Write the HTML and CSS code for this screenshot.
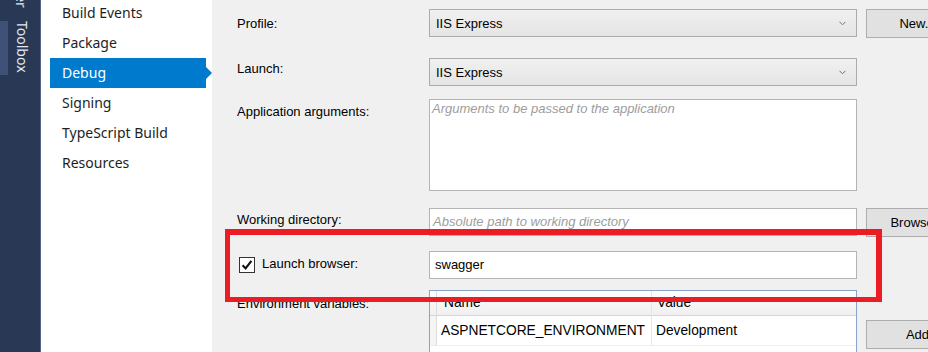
FILE: index.html
```html
<!DOCTYPE html>
<html lang="en">
<head>
    <meta charset="UTF-8">
    <title>Debug - Project Properties</title>
    <link rel="stylesheet" href="styles.css">
</head>
<body>

<div class="window">
    <div class="strip">
        <div class="strip-prev"><span class="strip-text">Server Explorer</span></div>
        <div class="strip-tab">
            <span class="strip-mark"></span>
            <span class="strip-text">Toolbox</span>
        </div>
    </div>

    <div class="nav">
        <ul class="nav-list">
            <li>Build Events</li>
            <li>Package</li>
            <li class="active">Debug</li>
            <li>Signing</li>
            <li>TypeScript Build</li>
            <li>Resources</li>
        </ul>
    </div>

    <div class="page">
        <div class="row row-profile">
            <label class="caption">Profile:</label>
            <div class="field combo">
                <span>IIS Express</span>
                <svg width="7" height="5" viewBox="0 0 7 5"><path d="M0.5 0.8 L3.5 3.8 L6.5 0.8" fill="none" stroke="#6f6f6f" stroke-width="1"/></svg>
            </div>
            <button class="btn">New...</button>
        </div>

        <div class="row row-launch">
            <label class="caption">Launch:</label>
            <div class="field combo">
                <span>IIS Express</span>
                <svg width="7" height="5" viewBox="0 0 7 5"><path d="M0.5 0.8 L3.5 3.8 L6.5 0.8" fill="none" stroke="#6f6f6f" stroke-width="1"/></svg>
            </div>
        </div>

        <div class="row row-args">
            <label class="caption">Application arguments:</label>
            <div class="field memo"><span class="hint">Arguments to be passed to the application</span></div>
        </div>

        <div class="row row-dir">
            <label class="caption">Working directory:</label>
            <div class="field textbox"><span class="hint">Absolute path to working directory</span></div>
            <button class="btn">Browse...</button>
        </div>

        <div class="row row-browser">
            <label class="caption check-caption">
                <span class="check"><svg width="14" height="14" viewBox="0 0 14 14"><path d="M2.6 7.2 L5.6 10.4 L11.4 2.8" fill="none" stroke="#111" stroke-width="2.1"/></svg></span>
                Launch browser:
            </label>
            <div class="field textbox value">swagger</div>
        </div>

        <div class="row row-env">
            <label class="caption">Environment variables:</label>
            <div class="field vars">
                <div class="vars-line vars-head">
                    <div class="cell cell-pick"></div>
                    <div class="cell">Name</div>
                    <div class="cell">Value</div>
                </div>
                <div class="vars-line">
                    <div class="cell cell-pick"></div>
                    <div class="cell">ASPNETCORE_ENVIRONMENT</div>
                    <div class="cell">Development</div>
                </div>
            </div>
            <button class="btn btn-add">Add</button>
        </div>
    </div>

    <div class="callout"></div>
</div>

</body>
</html>
```

FILE: styles.css
```css
* {
    box-sizing: border-box;
    margin: 0;
    padding: 0;
}
body {
    background: #f0f0f0;
    overflow: hidden;
    font-family: "Liberation Sans", Arial, sans-serif;
    font-size: 13px;
    color: #000;
}
.window {
    position: relative;
    display: flex;
    height: 352px;
    overflow: hidden;
}

/* side tool strip */
.strip {
    width: 41px;
    flex: none;
    background: #293955;
    border-right: 1px solid #53638a;
    display: flex;
    flex-direction: column;
    overflow: hidden;
}
.strip-prev {
    height: 8px;
    overflow: hidden;
    display: flex;
    flex-direction: column;
    align-items: flex-start;
    justify-content: flex-end;
    padding-left: 15px;
}
.strip-tab {
    display: flex;
    height: 54px;
    margin-top: 13px;
}
.strip-mark {
    width: 8px;
    background: #3f5177;
}
.strip-text {
    display: block;
    writing-mode: vertical-rl;
    font-family: "Noto Sans", sans-serif;
    font-size: 14px;
    line-height: 13px;
    color: #e4e7ec;
    white-space: nowrap;
}
.strip-tab .strip-text {
    margin-left: 8px;
    padding-top: 0;
}

/* property pages list */
.nav {
    width: 171px;
    flex: none;
    background: #fff;
    padding-left: 9px;
}
.nav-list {
    list-style: none;
    margin-top: -2px;
}
.nav-list li {
    position: relative;
    width: 156px;
    height: 30px;
    line-height: 30px;
    padding-left: 12px;
    font-family: "Noto Sans", sans-serif;
    font-size: 14px;
    color: #1e1e1e;
}
.nav-list li.active {
    background: #007acc;
    color: #fff;
}
.nav-list li.active::after {
    content: "";
    position: absolute;
    left: 100%;
    top: 9px;
    border-left: 6px solid #007acc;
    border-top: 6px solid transparent;
    border-bottom: 6px solid transparent;
}

/* debug page */
.page {
    flex: 1;
    padding: 9px 0 0 25px;
}
.row {
    display: flex;
    align-items: flex-start;
}
.caption {
    display: block;
    width: 192px;
    flex: none;
    line-height: 15px;
}
.field {
    width: 428px;
    flex: none;
}
.btn {
    width: 103px;
    height: 29px;
    flex: none;
    margin-left: 9px;
    border: 1px solid #adadad;
    background: #e1e1e1;
    font: inherit;
    color: #000;
}

.row-profile .caption { padding-top: 7px; }
.row-launch { margin-top: 20px; }
.row-launch .caption { padding-top: 3px; }
.row-args { margin-top: 13px; }
.row-args .caption { padding-top: 5px; }
.row-dir { margin-top: 17px; }
.row-dir .caption { padding-top: 4px; }
.row-browser { margin-top: 14px; }
.row-env { margin-top: 11px; }
.row-env .caption { padding-top: 6px; }

.combo {
    height: 28px;
    border: 1px solid #acacac;
    background: linear-gradient(#f0f0f0, #e5e5e5);
    display: flex;
    align-items: center;
    justify-content: space-between;
    padding: 0 10px 0 6px;
}
.textbox {
    height: 28px;
    border: 1px solid #b4b4b4;
    background: #fff;
    line-height: 26px;
    padding: 0 3px;
}
.memo {
    height: 92px;
    border: 1px solid #b4b4b4;
    background: #fff;
    padding: 1px 2px;
    line-height: 15px;
}
.hint {
    font-style: italic;
    color: #9d9d9d;
}
.value {
    padding-left: 5px;
}

.check-caption {
    display: flex;
    align-items: flex-start;
    padding: 5px 0 0 2px;
}
.check {
    width: 16px;
    height: 16px;
    margin: 1px 7px 0 0;
    border: 1px solid #333;
    background: #fff;
    display: flex;
    align-items: center;
    justify-content: center;
}

/* environment variables grid */
.vars {
    height: 62px;
    border: 1px solid #8ba3c7;
    border-bottom: none;
    background: #fff;
    font-size: 13.75px;
}
.vars-line {
    display: grid;
    grid-template-columns: 7px 215px 1fr;
}
.cell {
    height: 30px;
    line-height: 16px;
    padding: 7px 0 0 4px;
    border-right: 1px solid #e6e6e6;
    border-bottom: 1px solid #eeeeee;
    white-space: nowrap;
}
.cell:last-child {
    border-right: none;
}
.cell-pick {
    padding: 0;
    background: #f5f5f5;
    border-right-color: #dcdcdc;
}
.vars-head .cell {
    height: 25px;
    padding: 4px 0 0 7px;
    background: linear-gradient(#fdfdfd, #f0f0f0);
    border-bottom-color: #d5d5d5;
}
.vars-head .cell:last-child {
    padding-left: 5px;
}
.vars-head .cell-pick {
    padding: 0;
}
.btn-add {
    margin-top: 30px;
}

/* red annotation frame */
.callout {
    position: absolute;
    left: 225px;
    top: 229px;
    width: 657px;
    height: 73px;
    border-style: solid;
    border-color: #ec1c24;
    border-width: 6px 6px 5px 5px;
}
```
